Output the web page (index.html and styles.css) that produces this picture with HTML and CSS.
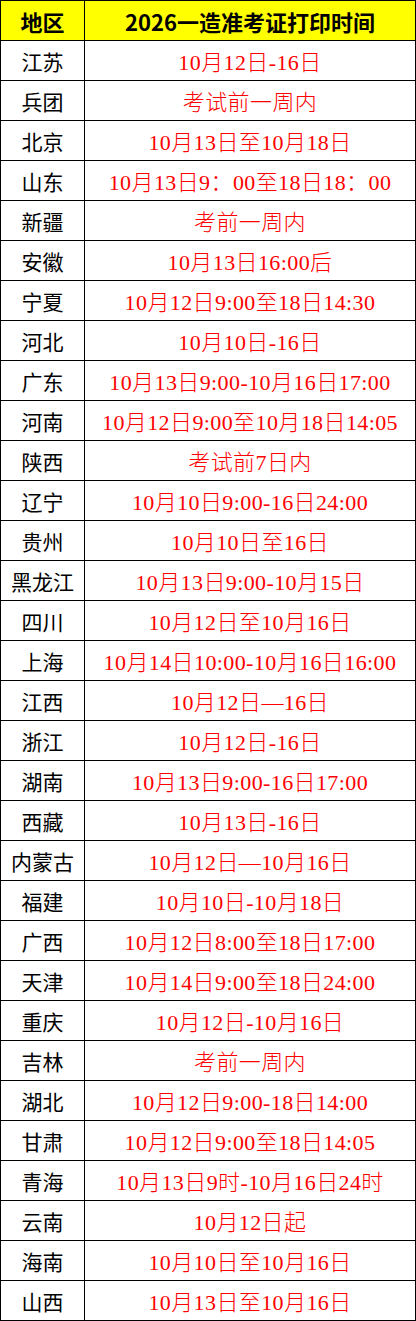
FILE: index.html
```html
<!DOCTYPE html>
<html lang="zh-CN">
<head>
<meta charset="utf-8">
<title>2026一造准考证打印时间</title>
<link rel="stylesheet" href="styles.css">
</head>
<body>
<div class="sheet">
  <div class="cell head">地区</div><div class="cell head">2026一造准考证打印时间</div>
  <div class="cell region">江苏</div><div class="cell time">10月12日-16日</div>
  <div class="cell region">兵团</div><div class="cell time">考试前一周内</div>
  <div class="cell region">北京</div><div class="cell time">10月13日至10月18日</div>
  <div class="cell region">山东</div><div class="cell time">10月13日9：00至18日18：00</div>
  <div class="cell region">新疆</div><div class="cell time">考前一周内</div>
  <div class="cell region">安徽</div><div class="cell time">10月13日16:00后</div>
  <div class="cell region">宁夏</div><div class="cell time">10月12日9:00至18日14:30</div>
  <div class="cell region">河北</div><div class="cell time">10月10日-16日</div>
  <div class="cell region">广东</div><div class="cell time">10月13日9:00-10月16日17:00</div>
  <div class="cell region">河南</div><div class="cell time">10月12日9:00至10月18日14:05</div>
  <div class="cell region">陕西</div><div class="cell time">考试前7日内</div>
  <div class="cell region">辽宁</div><div class="cell time">10月10日9:00-16日24:00</div>
  <div class="cell region">贵州</div><div class="cell time">10月10日至16日</div>
  <div class="cell region">黑龙江</div><div class="cell time">10月13日9:00-10月15日</div>
  <div class="cell region">四川</div><div class="cell time">10月12日至10月16日</div>
  <div class="cell region">上海</div><div class="cell time">10月14日10:00-10月16日16:00</div>
  <div class="cell region">江西</div><div class="cell time">10月12日—16日</div>
  <div class="cell region">浙江</div><div class="cell time">10月12日-16日</div>
  <div class="cell region">湖南</div><div class="cell time">10月13日9:00-16日17:00</div>
  <div class="cell region">西藏</div><div class="cell time">10月13日-16日</div>
  <div class="cell region">内蒙古</div><div class="cell time">10月12日—10月16日</div>
  <div class="cell region">福建</div><div class="cell time">10月10日-10月18日</div>
  <div class="cell region">广西</div><div class="cell time">10月12日8:00至18日17:00</div>
  <div class="cell region">天津</div><div class="cell time">10月14日9:00至18日24:00</div>
  <div class="cell region">重庆</div><div class="cell time">10月12日-10月16日</div>
  <div class="cell region">吉林</div><div class="cell time">考前一周内</div>
  <div class="cell region">湖北</div><div class="cell time">10月12日9:00-18日14:00</div>
  <div class="cell region">甘肃</div><div class="cell time">10月12日9:00至18日14:05</div>
  <div class="cell region">青海</div><div class="cell time">10月13日9时-10月16日24时</div>
  <div class="cell region">云南</div><div class="cell time">10月12日起</div>
  <div class="cell region">海南</div><div class="cell time">10月10日至10月16日</div>
  <div class="cell region">山西</div><div class="cell time">10月13日至10月16日</div>
</div>
</body>
</html>
```

FILE: styles.css
```css
html, body {
  margin: 0;
  padding: 0;
  background: #ffffff;
}

.sheet {
  display: grid;
  grid-template-columns: 83px 330px;
  grid-auto-rows: 39px;
  gap: 1px;
  padding: 1px;
  width: 414px;
  background: #000000;
}

.cell {
  display: flex;
  align-items: center;
  justify-content: center;
  background: #ffffff;
  white-space: nowrap;
  line-height: 1;
}

.head {
  background: #ffff00;
  color: #000000;
  font-family: "Noto Sans CJK SC", sans-serif;
  font-weight: 700;
  font-size: 22px;
}

.region {
  color: #000000;
  font-family: "Noto Sans CJK SC", sans-serif;
  font-size: 21px;
  padding-top: 2px;
}

.time {
  color: #ff0000;
  font-family: "Liberation Serif", "Noto Sans CJK SC", serif;
  font-weight: 300;
  font-size: 22px;
  letter-spacing: 0.4px;
  padding-top: 4px;
}
```
